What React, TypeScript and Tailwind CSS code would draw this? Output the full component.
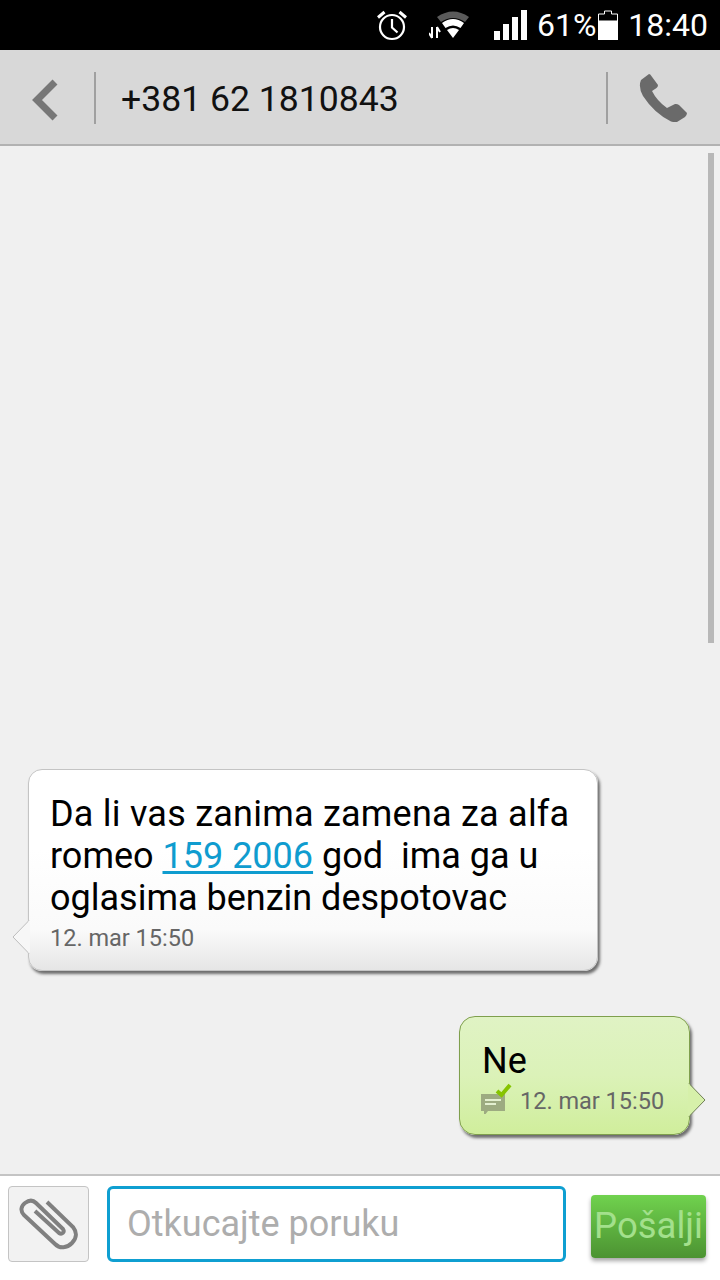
function StatusBar() {
  return (
    <div className="h-[50px] bg-black text-white flex items-center justify-end pr-[12px] text-[32px] shrink-0">
      {/* alarm */}
      <svg width="32" height="32" viewBox="0 0 32 32" className="mr-[21px] mb-[1px]" fill="none" stroke="#fff">
        <circle cx="16" cy="18" r="12" strokeWidth="2.2" />
        <path d="M16 10v8.500l5.500 5" strokeWidth="2.2" />
        <path d="M2 8.500 8.500 3M30 8.500 23.500 3" strokeWidth="3" />
      </svg>
      {/* wifi */}
      <svg width="44" height="32" viewBox="0 0 44 32" className="mr-[21px]">
        <path d="M8 8Q24 -3 40 8L36 13Q24 5 12 13Z" fill="#5a5a5a" />
        <path d="M13 14Q24 6 35 14L31.500 19Q24 14 16.500 19Z" fill="#fff" />
        <path d="M18 21Q24 17 30 21L24 29Z" fill="#fff" />
        <path d="M3 18v11M0 24l3 5M8 18v11M8 18l3 5" stroke="#fff" strokeWidth="2" fill="none" />
      </svg>
      <div className="flex items-end gap-[3px] h-[30px] mr-[10px] mb-[1px]">
        <div className="w-[6px] h-[9px] bg-white" />
        <div className="w-[6px] h-[16px] bg-white" />
        <div className="w-[6px] h-[23px] bg-white" />
        <div className="w-[6px] h-[30px] bg-white" />
      </div>
      <span className="leading-none">61%</span>
      <svg width="20" height="30" viewBox="0 0 20 30" className="ml-[2px] mr-[10px] mb-[1px]">
        <path d="M6.500 1h7v3h6v7H.5V4h6Z" fill="none" stroke="#fff" />
        <rect x="0" y="11" width="20" height="19" fill="#fff" />
      </svg>
      <span className="leading-none">18:40</span>
    </div>
  );
}

function Header() {
  return (
    <div className="h-[96px] shrink-0 bg-[#d8d8d8] border-b-[2px] border-[#b2b2b2] pt-[2px] flex items-center">
      <div className="w-[96px] h-[52px] border-r-[2px] border-[#a0a0a0] flex items-center">
        <svg width="28" height="42" viewBox="0 0 28 42" className="ml-[31px] mt-[3px]" fill="none">
          <path d="M24 3 6 21 24 39" stroke="#777" strokeWidth="7" />
        </svg>
      </div>
      <div className="flex-1 pl-[25px] mt-[4px] text-[35.6px] leading-none text-[#111]">+381 62 1810843</div>
      <div className="w-[114px] h-[52px] border-l-[2px] border-[#a0a0a0] flex items-center">
        <svg width="48" height="48" viewBox="0 0 48 48" className="ml-[31px]">
          <path
            d="M2 6 10 0Q11.500 0 12 1.500L19 11Q19 13 17.500 14L13 17Q18 27 28 34L36 30Q38 29.500 40 31L48 39Q48 41 46 43L38 48Q35 48.500 32 47.500 15 39 4 22-1 13 2 6Z"
            fill="#6a6a6a"
          />
        </svg>
      </div>
    </div>
  );
}

function Messages() {
  return (
    <div className="flex-1 relative bg-[#f0f0f0] flex flex-col justify-end pb-[39px]">
      <div className="absolute right-[6px] top-[7px] w-[6px] h-[490px] bg-[#b8b8b8]" />

      <div className="relative ml-[28px] w-[570px] h-[202px] rounded-[14px] border border-[#c4c4c4] bg-gradient-to-b from-white from-40% via-[#fafafa] via-80% to-[#e6e6e6] shadow-[2px_3px_3px_rgba(0,0,0,0.55)] pl-[21px] pt-[23px]">
        <svg width="18" height="34" viewBox="0 0 18 34" className="absolute left-[-17px] top-[150px]">
          <path d="M17 0.500 1 17 17 33.500" fill="#f7f7f7" stroke="#bdbdbd" />
          <rect x="16" y="1.500" width="2" height="31" fill="#f7f7f7" />
        </svg>
        <p className="text-[36px] leading-[42px] text-black">
          <span className="tracking-[0.23px]">Da li vas zanima zamena za alfa</span>
          <br />
          romeo <span className="text-[#0f9ccf] underline underline-offset-[3px]">159 2006</span> god&nbsp; ima ga u
          <br />
          oglasima benzin despotovac
        </p>
        <p className="text-[23.500px] leading-[30px] mt-[4px] text-[#666]">12. mar 15:50</p>
      </div>

      <div className="relative mt-[45px] ml-[459px] w-[231px] h-[119px] rounded-[16px] border border-[#7f9f4d] bg-gradient-to-b from-[#e0f3c4] via-[#dbf2b8] to-[#d0ee9c] shadow-[2px_3px_3px_rgba(0,0,0,0.55)] pl-[22px] pt-[23px]">
        <svg width="18" height="34" viewBox="0 0 18 34" className="absolute right-[-17px] top-[66px]">
          <path d="M1 0.500 17 17 1 33.500" fill="#d6f0aa" stroke="#6f7f55" />
          <rect x="0" y="1.500" width="2" height="31" fill="#d6f0aa" />
        </svg>
        <p className="text-[36px] leading-[42px] text-black">Ne</p>
        <div className="flex items-center h-[30px] mt-[4px]">
          <svg width="32" height="32" viewBox="0 0 32 32" className="-ml-[2px] mr-[8px] -mt-[6px]">
            <path d="M1 12h24v17H8l-4 5v-5H1Z" fill="#9dab81" />
            <path d="M5 18h16M5 22h11" stroke="#e3efd0" strokeWidth="2" />
            <path d="M17 9l4.500 4L30 3" fill="none" stroke="#86c400" strokeWidth="4" />
          </svg>
          <span className="text-[23.500px] leading-[30px] text-[#666]">12. mar 15:50</span>
        </div>
      </div>
    </div>
  );
}

function Composer() {
  return (
    <div className="h-[106px] shrink-0 bg-white border-t-[2px] border-[#c4c4c4] flex items-start pt-[10px] pl-[8px]">
      <button className="w-[81px] h-[76px] rounded-[4px] bg-[#f2f2f2] border border-[#c4c4c4] flex items-center justify-center">
        <svg width="62" height="56" viewBox="0 0 62 56" fill="none" stroke="#808080" strokeWidth="4">
          <path d="M29 6 55 31C59 36 59 42 54 47 49 52 42 53 37 48L6 19C2 15 3 10 7 7 11 4 15 4 18 7L45 33C47 36 44 39 41 37L17 15" />
        </svg>
      </button>
      <div className="ml-[18px] w-[459px] h-[76px] rounded-[6px] border-[3px] border-[#0f9fd1] bg-white flex items-center pl-[17px] text-[36px] text-[#adadad]">
        Otkucajte poruku
      </div>
      <button className="ml-[25px] mt-[9px] w-[115px] h-[63px] rounded-[4px] bg-gradient-to-b from-[#70d24e] to-[#4c9332] shadow-[0_3px_4px_rgba(0,0,0,0.35)] text-[36.500px] leading-none text-[#a3e08c] flex items-center justify-center">
        Pošalji
      </button>
    </div>
  );
}

export default function App() {
  return (
    <div className="w-[720px] h-[1280px] flex flex-col overflow-hidden font-['Roboto',sans-serif]">
      <StatusBar />
      <Header />
      <Messages />
      <Composer />
    </div>
  );
}
